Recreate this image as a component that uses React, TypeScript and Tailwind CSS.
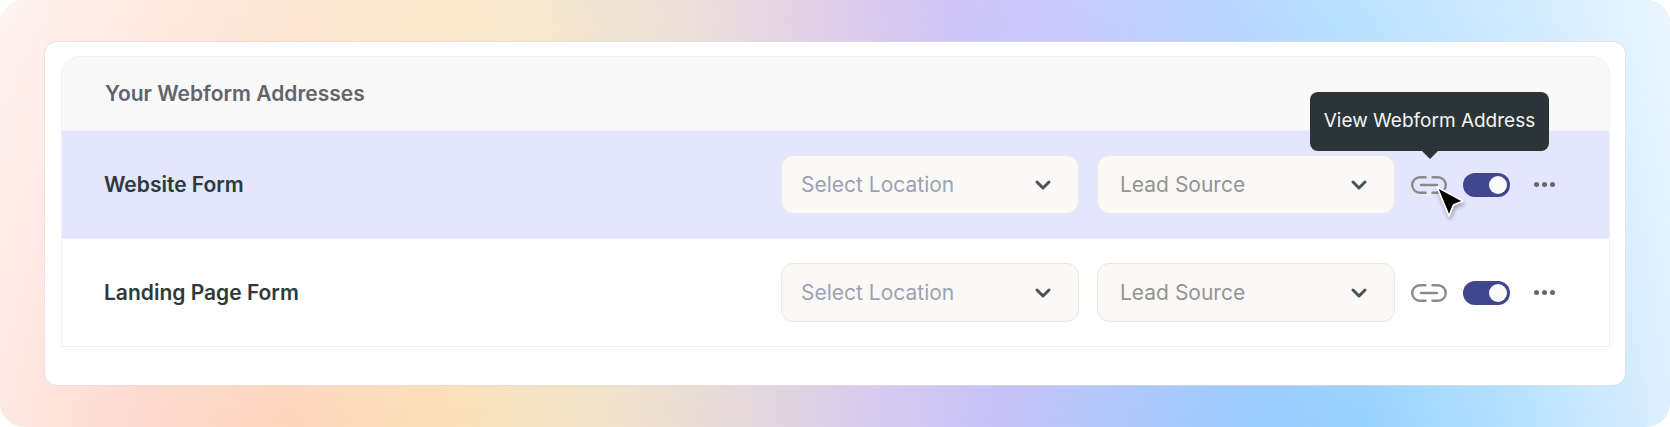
import React from 'react';
import { ChevronDown } from 'lucide-react';

interface Webform {
  id: string;
  name: string;
  active: boolean;
}

interface DropdownProps {
  id: string;
  label: string;
  textClass: string;
}

const webforms: Webform[] = [
  { id: 'website', name: 'Website Form', active: true },
  { id: 'landing', name: 'Landing Page Form', active: false },
];

const Dropdown: React.FC<DropdownProps> = ({ id, label, textClass }) => (
  <div className="relative w-[298px]">
    <select
      id={id}
      aria-label={label}
      className={`h-[59px] w-full appearance-none rounded-xl border border-[#e9e8e6] bg-[#faf9f7] pr-14 text-[21px] outline-none ${textClass}`}
    >
      <option>{label}</option>
    </select>
    <div className="pointer-events-none absolute inset-y-0 right-6 flex items-center">
      <ChevronDown className="size-6 text-[#4a5154]" strokeWidth={3} />
    </div>
  </div>
);

const LinkIcon = () => (
  <svg width="36" height="18" viewBox="0 0 36 18" fill="none" stroke="#8a8a8a" strokeWidth="2.4" strokeLinecap="round">
    <path d="M14.5 1.2H9a7.8 7.8 0 0 0 0 15.6h5.5" />
    <path d="M21.5 1.2H27a7.8 7.8 0 0 1 0 15.6h-5.5" />
    <path d="M10 9h16" />
  </svg>
);

const Cursor = () => (
  <svg
    className="pointer-events-none absolute top-2 left-6 drop-shadow-[1px_3px_2px_rgba(0,0,0,0.3)]"
    width="32"
    height="36"
    viewBox="0 0 32 36"
  >
    <path
      d="M2 3 L28 17 L18.5 21 L14 32 Z"
      fill="#000"
      stroke="#fff"
      strokeWidth="1.8"
      strokeLinejoin="round"
    />
  </svg>
);

const WebformRow: React.FC<{ form: Webform }> = ({ form }) => (
  <li
    className={`flex h-[108px] items-center border-b border-[#efeff1] pr-[54px] pl-[42px] ${
      form.active ? 'bg-[#e4e5fe]' : 'bg-white'
    }`}
  >
    <h3 className="flex-1 text-[21px] font-semibold text-[#2e393c]">{form.name}</h3>
    <div className="flex items-center">
      <div className="flex gap-[18px]">
        <Dropdown id={`${form.id}-location`} label="Select Location" textClass="pl-[19px] text-[#9ca2b2]" />
        <Dropdown id={`${form.id}-source`} label="Lead Source" textClass="pl-[22px] text-[#949494]" />
      </div>
      <div className="relative ml-4">
        <button type="button" aria-label="View Webform Address" className="block cursor-pointer">
          <LinkIcon />
        </button>
        {form.active && (
          <>
            <div
              role="tooltip"
              className="absolute bottom-full left-1/2 mb-[25px] ml-[-119px] flex h-[59px] w-[239px] items-center justify-center rounded-lg bg-[#2b3538] text-[19px] whitespace-nowrap text-[#f3f4f4]"
            >
              View Webform Address
              <span className="absolute top-full left-1/2 -ml-2 border-x-8 border-t-8 border-x-transparent border-t-[#2b3538]" />
            </div>
            <Cursor />
          </>
        )}
      </div>
      <input
        type="checkbox"
        role="switch"
        defaultChecked
        aria-label={`${form.name} enabled`}
        className="ml-4 flex h-6 w-[47px] cursor-pointer appearance-none items-center rounded-full bg-gray-300 px-[3px] before:size-[18px] before:rounded-full before:bg-[#fafafa] checked:justify-end checked:bg-[#42468f]"
      />
      <button type="button" aria-label="More options" className="ml-6 flex cursor-pointer gap-[3px]">
        <span className="size-[5px] rounded-full bg-[#66696c]" />
        <span className="size-[5px] rounded-full bg-[#66696c]" />
        <span className="size-[5px] rounded-full bg-[#66696c]" />
      </button>
    </div>
  </li>
);

const App: React.FC = () => {
  return (
    <main className="relative overflow-hidden rounded-[24px] bg-[linear-gradient(90deg,#ffe8e3_0%,#fdd9cf_9%,#fdd6bd_17%,#fbe0ba_27%,#f3e5c8_35%,#e5d8dc_45%,#d5cbf0_53%,#c6c2f8_60%,#b4c8fb_66%,#9bccff_75%,#99d3ff_82%,#b2e0ff_90%,#deefff_100%)] px-11 py-[41px] font-['Inter',sans-serif]">
      <div className="absolute inset-0 bg-[linear-gradient(90deg,#fff3f1_0%,#feeae2_9%,#fde6d4_17%,#fbe9cc_27%,#f4e8cf_33%,#ecdedb_42%,#dfcdea_50%,#cdc4f5_57%,#cac8fa_63%,#bad3fd_72%,#bae0ff_80%,#cfeaff_90%,#eaf6ff_100%)] mask-b-from-0% mask-b-to-100%" />
      <section className="relative rounded-[13px] border border-[#e9d9d8]/60 bg-white bg-clip-padding pt-[14px] pr-[15px] pb-[38px] pl-4">
        <h2 className="flex h-[75px] items-center rounded-t-[18px] border border-[#f1f1f2] bg-[#f9f9f9] pl-[43px] text-[21px] font-semibold text-[#62646c]">
          Your Webform Addresses
        </h2>
        <ul className="border-x border-[#f1f1f2]">
          {webforms.map((form) => (
            <WebformRow key={form.id} form={form} />
          ))}
        </ul>
      </section>
    </main>
  );
};

export default App;
